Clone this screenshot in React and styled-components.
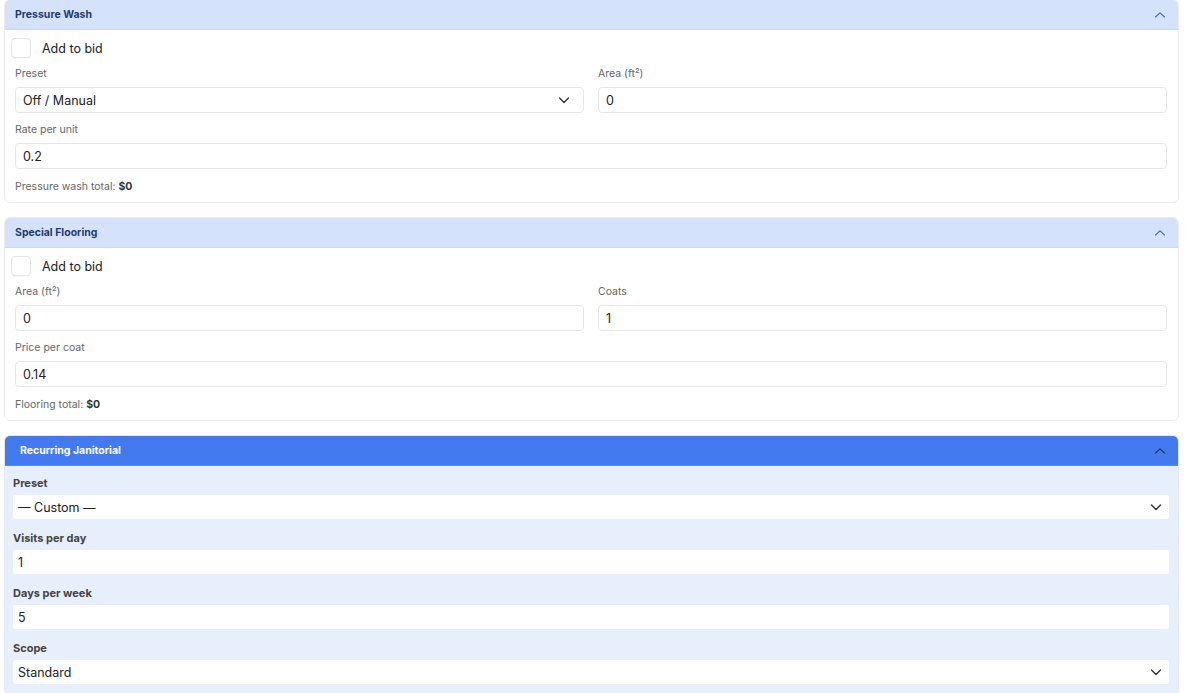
import React from 'react';
import styled, { createGlobalStyle } from 'styled-components';

const GlobalStyle = createGlobalStyle`
  html, body {
    margin: 0;
    padding: 0;
    background: #ffffff;
    font-family: Inter, "Noto Sans", "Liberation Sans", sans-serif;
    color: #222;
  }
`;

const Page = styled.div`
  display: flex;
  flex-direction: column;
  gap: 14px;
  padding: 0 21px 0 4px;
  margin-top: -1px;
`;

const Panel = styled.section`
  border: 1px solid #ececec;
  border-radius: 6px;
  overflow: hidden;
  background: ${(p) => (p.$active ? '#e8effc' : '#ffffff')};
  border-color: ${(p) => (p.$active ? '#e0e8f8' : '#ececec')};
`;

const Header = styled.div`
  display: flex;
  align-items: center;
  justify-content: space-between;
  height: 29px;
  padding: 0 12px 0 ${(p) => (p.$active ? '15px' : '10px')};
  background: ${(p) => (p.$active ? '#437af0' : '#d4e3fb')};
  border-bottom: 1px solid ${(p) => (p.$active ? '#5b8cf2' : '#c9d9f5')};
`;

const Title = styled.h3`
  margin: 0;
  font-size: 10.5px;
  font-weight: 700;
  color: ${(p) => (p.$active ? '#ffffff' : '#1f3b6f')};
`;

const Chevron = styled.svg`
  width: 12px;
  height: 12px;
  display: block;
`;

const Body = styled.div`
  display: flex;
  flex-direction: column;
  padding: 8px 11px 8px 10px;
`;

const CheckRow = styled.label`
  display: flex;
  align-items: center;
  gap: 11px;
  margin-left: -4px;
  margin-bottom: 9px;
  font-size: 12.5px;
  color: #222;
`;

const Box = styled.span`
  width: 18px;
  height: 18px;
  border: 1px solid #e3e3e3;
  border-radius: 4px;
  background: #fff;
  box-shadow: 0 1px 1px rgba(0, 0, 0, 0.03);
`;

const Grid = styled.div`
  display: grid;
  grid-template-columns: 1fr 1fr;
  column-gap: 14px;
`;

const Field = styled.div`
  display: flex;
  flex-direction: column;
  margin-bottom: 10px;
`;

const Label = styled.span`
  font-size: 10.5px;
  line-height: 14px;
  margin-bottom: 6px;
  color: #666;
`;

const Input = styled.div`
  display: flex;
  align-items: center;
  justify-content: space-between;
  height: 24px;
  padding: 0 13px 0 7px;
  border: 1px solid #e6e6e6;
  border-radius: 4px;
  background: #fff;
  font-size: 12.5px;
  color: #222;
`;

const Total = styled.p`
  margin: 1px 0 0;
  font-size: 10.5px;
  line-height: 14px;
  color: #666;

  b {
    color: #333;
  }
`;

const JanBody = styled.div`
  display: flex;
  flex-direction: column;
  gap: 12px;
  padding: 10px 9px 10px 8px;
`;

const JanField = styled.div`
  display: flex;
  flex-direction: column;
`;

const JanLabel = styled.span`
  font-size: 11px;
  font-weight: 700;
  line-height: 14px;
  margin-bottom: 5px;
  color: #444;
`;

const JanInput = styled.div`
  display: flex;
  align-items: center;
  justify-content: space-between;
  height: 24px;
  padding: 0 7px 0 5px;
  border-radius: 3px;
  background: #fff;
  font-size: 12.5px;
  color: #222;
`;

const Up = ({ color }) => (
  <Chevron viewBox="0 0 12 12" fill="none">
    <path d="M1.5 8l4.5-4.2L10.5 8" stroke={color} strokeWidth="1.1" strokeLinecap="round" strokeLinejoin="round" />
  </Chevron>
);

const Down = () => (
  <Chevron viewBox="0 0 12 12" fill="none">
    <path d="M1.5 4l4.5 4.5 4.5-4.5" stroke="#333" strokeWidth="1.4" strokeLinecap="round" strokeLinejoin="round" />
  </Chevron>
);

const TextField = ({ label, value, select }) => (
  <Field>
    <Label>{label}</Label>
    <Input>
      {value}
      {select && <Down />}
    </Input>
  </Field>
);

const JanitorialField = ({ label, value, select }) => (
  <JanField>
    <JanLabel>{label}</JanLabel>
    <JanInput>
      {value}
      {select && <Down />}
    </JanInput>
  </JanField>
);

const Section = ({ title, children }) => (
  <Panel>
    <Header>
      <Title>{title}</Title>
      <Up color="#4f68a0" />
    </Header>
    <Body>
      <CheckRow>
        <Box />
        Add to bid
      </CheckRow>
      {children}
    </Body>
  </Panel>
);

export default function App() {
  return (
    <>
      <GlobalStyle />
      <Page>
        <Section title="Pressure Wash">
          <Grid>
            <TextField label="Preset" value="Off / Manual" select />
            <TextField label="Area (ft²)" value="0" />
          </Grid>
          <TextField label="Rate per unit" value="0.2" />
          <Total>
            Pressure wash total: <b>$0</b>
          </Total>
        </Section>

        <Section title="Special Flooring">
          <Grid>
            <TextField label="Area (ft²)" value="0" />
            <TextField label="Coats" value="1" />
          </Grid>
          <TextField label="Price per coat" value="0.14" />
          <Total>
            Flooring total: <b>$0</b>
          </Total>
        </Section>

        <Panel $active>
          <Header $active>
            <Title $active>Recurring Janitorial</Title>
            <Up color="#24344f" />
          </Header>
          <JanBody>
            <JanitorialField label="Preset" value="— Custom —" select />
            <JanitorialField label="Visits per day" value="1" />
            <JanitorialField label="Days per week" value="5" />
            <JanitorialField label="Scope" value="Standard" select />
          </JanBody>
        </Panel>
      </Page>
    </>
  );
}
